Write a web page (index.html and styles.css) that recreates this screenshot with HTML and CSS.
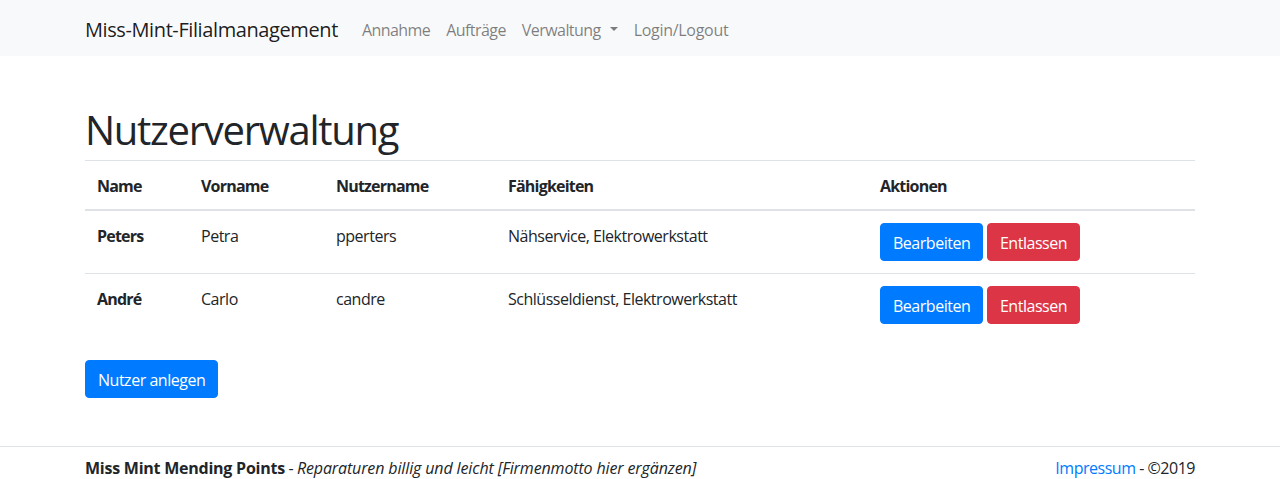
FILE: index.html
```html
<!DOCTYPE html>
<html lang="de">
<head>
<meta charset="utf-8">
<title>Nutzerverwaltung</title>
<link rel="stylesheet" href="styles.css">
</head>
<body>
<nav class="navbar">
  <div class="container nav-inner">
    <a class="brand" href="#">Miss-Mint-Filialmanagement</a>
    <ul class="nav">
      <li><a class="nav-link" href="#">Annahme</a></li>
      <li><a class="nav-link" href="#">Aufträge</a></li>
      <li><a class="nav-link dropdown" href="#">Verwaltung</a></li>
      <li><a class="nav-link login" href="#">Login/Logout</a></li>
    </ul>
  </div>
</nav>
<main class="container main">
  <h1>Nutzerverwaltung</h1>
  <table class="table">
    <colgroup>
      <col class="c1"><col class="c2"><col class="c3"><col class="c4"><col class="c5">
    </colgroup>
    <thead>
      <tr><th>Name</th><th>Vorname</th><th>Nutzername</th><th>Fähigkeiten</th><th>Aktionen</th></tr>
    </thead>
    <tbody>
      <tr>
        <th>Peters</th><td>Petra</td><td>pperters</td><td>Nähservice, Elektrowerkstatt</td>
        <td><a class="btn btn-primary" href="#">Bearbeiten</a> <a class="btn btn-danger" href="#">Entlassen</a></td>
      </tr>
      <tr>
        <th>André</th><td>Carlo</td><td>candre</td><td>Schlüsseldienst, Elektrowerkstatt</td>
        <td><a class="btn btn-primary" href="#">Bearbeiten</a> <a class="btn btn-danger" href="#">Entlassen</a></td>
      </tr>
    </tbody>
  </table>
  <a class="btn btn-primary" href="#">Nutzer anlegen</a>
</main>
<footer class="footer">
  <div class="container footer-inner">
    <span><strong class="motto-name">Miss Mint Mending Points</strong> - <em class="motto">Reparaturen billig und leicht [Firmenmotto hier ergänzen]</em></span>
    <span><a class="link" href="#">Impressum</a> - ©2019</span>
  </div>
</footer>
</body>
</html>
```
FILE: styles.css
```css
* { box-sizing: border-box; }
html, body { margin: 0; padding: 0; }
body {
  font-family: "Open Sans", "Noto Sans", sans-serif;
  font-size: 16px;
  line-height: 1.5;
  color: #212529;
  background: #fff;
  letter-spacing: -0.03em;
}
a { text-decoration: none; }
.container {
  width: 1140px;
  margin: 0 auto;
  padding: 0 15px;
}
.navbar {
  background: #f8f9fa;
  height: 56px;
}
.nav-inner {
  display: flex;
  align-items: center;
  height: 56px;
  padding-top: 3px;
}
.brand {
  font-size: 20px;
  line-height: 30px;
  color: rgba(0,0,0,.9);
  margin-right: 16px;
  letter-spacing: -0.02em;
}
.nav {
  display: flex;
  list-style: none;
  margin: 0;
  padding: 0;
}
.nav-link {
  display: block;
  padding: 8px;
  color: rgba(0,0,0,.5);
  letter-spacing: -0.035em;
}
.login { letter-spacing: -0.018em; }
.dropdown::after {
  content: "";
  display: inline-block;
  margin-left: 9px;
  vertical-align: .255em;
  border-top: .3em solid;
  border-right: .3em solid transparent;
  border-left: .3em solid transparent;
}
.main { padding-top: 48px; padding-bottom: 48px; }
h1 {
  font-size: 40px;
  font-weight: 400;
  line-height: 1.2;
  margin: 0 0 8px;
  padding-top: 2px;
  height: 48px;
  letter-spacing: -0.032em;
}
.table {
  width: 100%;
  border-collapse: collapse;
  margin-bottom: 24px;
  table-layout: fixed;
}
.c1 { width: 104px; }
.c2 { width: 135px; }
.c3 { width: 172px; }
.c4 { width: 372px; }
.table th, .table td {
  padding: 13px 12px 11px;
  text-align: left;
  vertical-align: top;
  border-top: 1px solid #dee2e6;
}
.table td:last-child { padding-top: 12px; padding-bottom: 12px; }
.table thead th {
  border-bottom: 2px solid #dee2e6;
  vertical-align: bottom;
  padding-top: 13px;
  padding-bottom: 11px;
}
.table th { font-weight: 700; letter-spacing: -0.05em; }
.btn {
  display: inline-block;
  padding: 7px 12px 5px;
  font-size: 16px;
  line-height: 24px;
  border-radius: 4px;
  color: #fff;
  border: 1px solid transparent;
}
.btn-primary { background: #007bff; border-color: #007bff; }
.btn-danger { background: #dc3545; border-color: #dc3545; }
.footer {
  border-top: 1px solid #dee2e6;
  padding: 9px 0;
}
.footer-inner {
  display: flex;
  justify-content: space-between;
}
.motto-name { letter-spacing: -0.015em; }
.motto { letter-spacing: -0.008em; }
.link { color: #007bff; }
```
